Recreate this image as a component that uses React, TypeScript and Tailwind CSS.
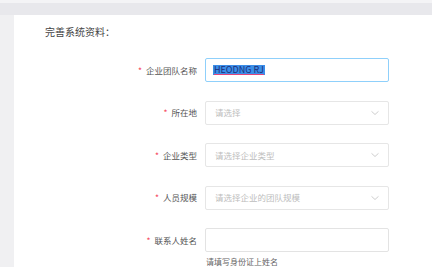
import React from "react";

const font = { fontFamily: '"Noto Sans CJK SC", "Noto Sans", sans-serif' };

function Chevron() {
  return (
    <svg width="8" height="5" viewBox="0 0 8 5" className="absolute right-[9px] top-1/2 -translate-y-1/2">
      <path d="M0.5 0.8 L4 4 L7.5 0.8" fill="none" stroke="#c8c8c8" strokeWidth="0.9" />
    </svg>
  );
}

function Row({ label, children }: { label: string; children: React.ReactNode }) {
  return (
    <div className="flex items-center h-[24px]">
      <div className="w-[191px] pr-[8px] flex justify-end items-center text-[8.5px] text-[#555]">
        <span className="text-[#f5475b] mr-[4px]">*</span>
        <span>{label}</span>
      </div>
      {children}
    </div>
  );
}

function Select({ placeholder }: { placeholder: string }) {
  return (
    <div className="relative w-[184px] h-[24px] border border-[#e6e6e6] rounded-[2px] bg-white flex items-center pl-[9px] text-[8.5px] text-[#bdbdbd]">
      {placeholder}
      <Chevron />
    </div>
  );
}

export default function App() {
  return (
    <div className="w-[432px] h-[267px] bg-white overflow-hidden" style={font}>
      <div className="h-[3px] bg-[#f4f4f6]" />
      <div className="h-[12px] bg-[#e8e8ec]" />
      <div className="flex h-[252px]">
        <div className="w-[14px] bg-[#f0f0f2]" />
        <div className="flex-1">
          <div className="pl-[31px] pt-[10px] text-[10px] leading-[14px] text-[#444]">完善系统资料：</div>
          <div className="mt-[19px] flex flex-col gap-[18.5px]">
            <Row label="企业团队名称">
              <div className="w-[184px] h-[24px] border border-[#8fd0fb] rounded-[2px] bg-white flex items-center pl-[7px] text-[9px]">
                <span className="bg-[#3b8ee8] text-[#1d2f7a] leading-[10px] px-[1px] underline decoration-[#e0457b] underline-offset-[1px]">
                  HEODNG RJ
                </span>
              </div>
            </Row>
            <Row label="所在地">
              <Select placeholder="请选择" />
            </Row>
            <Row label="企业类型">
              <Select placeholder="请选择企业类型" />
            </Row>
            <Row label="人员规模">
              <Select placeholder="请选择企业的团队规模" />
            </Row>
            <div>
              <Row label="联系人姓名">
                <div className="w-[184px] h-[24px] border border-[#e3e3e3] rounded-[2px] bg-white" />
              </Row>
              <div className="pl-[192px] mt-[5px] text-[8px] leading-[10px] text-[#666]">请填写身份证上姓名</div>
            </div>
          </div>
        </div>
      </div>
    </div>
  );
}
